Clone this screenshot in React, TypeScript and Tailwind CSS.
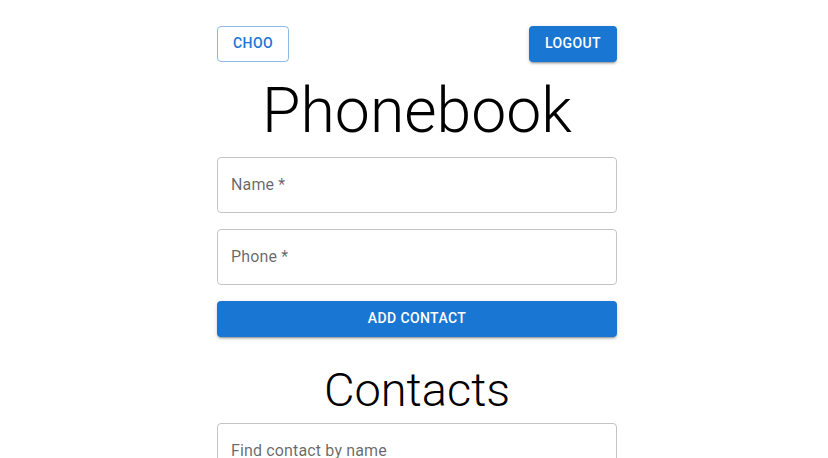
import React from "react";

const font = { fontFamily: "Roboto, 'Helvetica Neue', Arial, sans-serif" };

function Field({ label }: { label: string }) {
  return (
    <div className="h-[56px] w-full rounded-[4px] border border-[#c4c4c4] flex items-center pl-[13px] pr-[14px]">
      <span className="text-[16px] leading-[23px] -mt-[1px] text-[rgba(0,0,0,0.6)] tracking-[0.15px]">{label}</span>
    </div>
  );
}

export default function App() {
  return (
    <div className="min-h-screen bg-white pl-[6px]" style={font}>
      <div className="mx-auto w-[400px] pt-[26px] flex flex-col">
        <div className="flex justify-between items-center">
          <button className="h-[36px] w-[72px] pb-[2px] rounded-[4px] border border-[rgba(25,118,210,0.5)] text-[#1976d2] text-[14px] font-medium tracking-[0.4px] uppercase">
            Choo
          </button>
          <button className="h-[36px] w-[88px] pb-[2px] rounded-[4px] bg-[#1976d2] text-white text-[14px] font-medium tracking-[0.4px] uppercase shadow-[0px_3px_1px_-2px_rgba(0,0,0,0.2),0px_2px_2px_0px_rgba(0,0,0,0.14),0px_1px_5px_0px_rgba(0,0,0,0.12)]">
            Logout
          </button>
        </div>
        <h1 className="mt-[11px] mb-[9px] text-center text-[62.5px] leading-[75px] font-light text-black">Phonebook</h1>
        <div className="flex flex-col gap-[16px]">
          <Field label="Name *" />
          <Field label="Phone *" />
          <button className="h-[36px] w-full pb-[2px] rounded-[4px] bg-[#1976d2] text-white text-[14px] font-medium tracking-[0.4px] uppercase shadow-[0px_3px_1px_-2px_rgba(0,0,0,0.2),0px_2px_2px_0px_rgba(0,0,0,0.14),0px_1px_5px_0px_rgba(0,0,0,0.12)]">
            Add contact
          </button>
        </div>
        <h2 className="mt-[25px] mb-[5px] text-center text-[47px] leading-[56px] font-light text-black">Contacts</h2>
        <Field label="Find contact by name" />
      </div>
    </div>
  );
}
